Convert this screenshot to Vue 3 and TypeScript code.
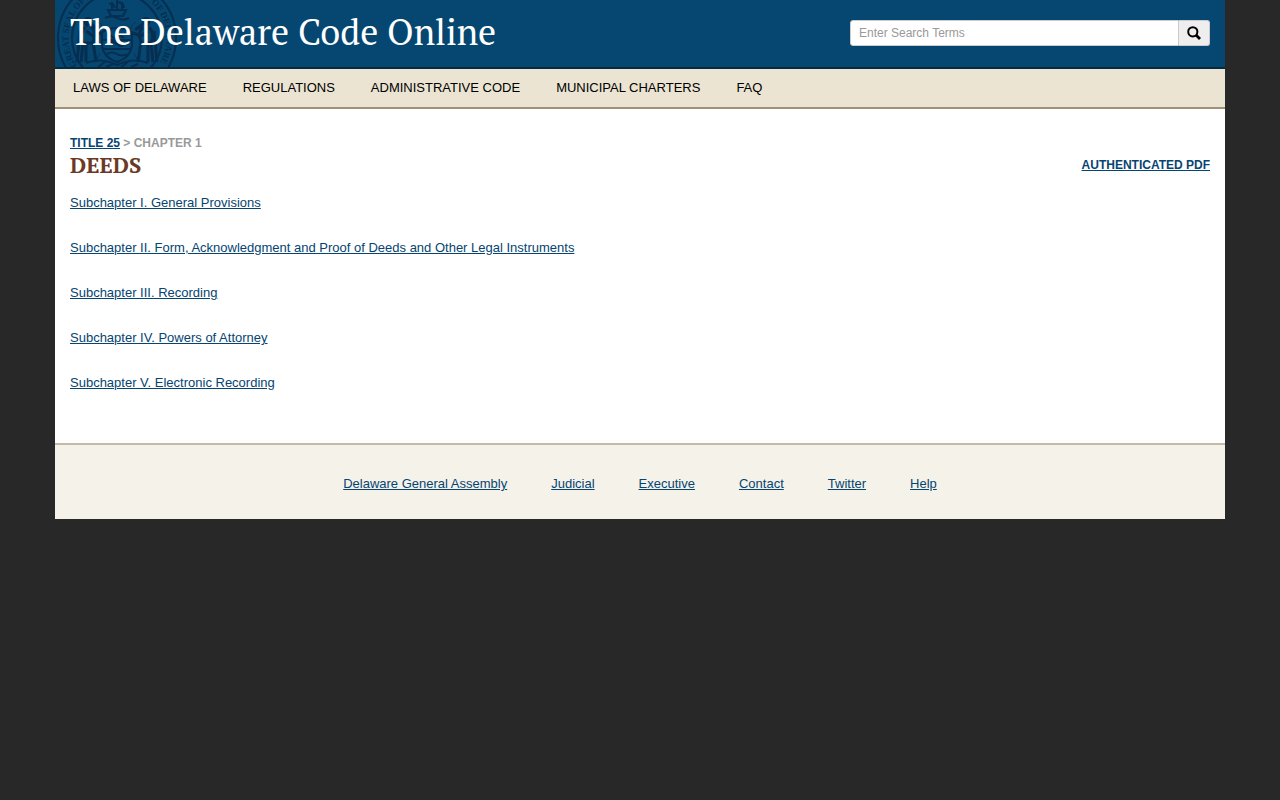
<script setup lang="ts">
interface PageLink {
  label: string
  href: string
}

const navLinks: PageLink[] = [
  { label: 'Laws of Delaware', href: '#laws' },
  { label: 'Regulations', href: '#regulations' },
  { label: 'Administrative Code', href: '#administrative' },
  { label: 'Municipal Charters', href: '#charters' },
  { label: 'FAQ', href: '#faq' },
]

const subchapters: PageLink[] = [
  { label: 'Subchapter I. General Provisions', href: '#sc01' },
  { label: 'Subchapter II. Form, Acknowledgment and Proof of Deeds and Other Legal Instruments', href: '#sc02' },
  { label: 'Subchapter III. Recording', href: '#sc03' },
  { label: 'Subchapter IV. Powers of Attorney', href: '#sc04' },
  { label: 'Subchapter V. Electronic Recording', href: '#sc05' },
]

const footerLinks: PageLink[] = [
  { label: 'Delaware General Assembly', href: '#assembly' },
  { label: 'Judicial', href: '#judicial' },
  { label: 'Executive', href: '#executive' },
  { label: 'Contact', href: '#contact' },
  { label: 'Twitter', href: '#twitter' },
  { label: 'Help', href: '#help' },
]
</script>

<template>
  <div class="container">
    <header class="banner">
      <svg class="seal" viewBox="0 0 124 67" aria-hidden="true">
        <defs>
          <path id="seal-text" d="M62 87 A49 49 0 1 1 63 87" />
        </defs>
        <g fill="none" stroke="#052e50">
          <circle cx="62" cy="38" r="59" stroke-width="2" />
          <circle cx="62" cy="38" r="45" stroke-width="2" />
          <path d="M53 10h18l-3 6H56zM62 0v10M57 2v7M67 2v7M54 4q4-2 6 4M63 2q6 1 6 6M50 18q6-3 12 0t12 0" stroke-width="2" />
          <path d="M47 32q15-8 30 0v14q-2 12-15 16-13-4-15-16zM47 40h30M47 49h30" stroke-width="2" />
          <path d="M53 44q5-4 9 0t9 0M52 54q5-3 10 0t10 0M55 35l4 3 5-3 5 3" stroke-width="2" />
          <path d="M33 18q-5 5 0 8M30 27q-6 7-2 16l-2 19M36 27q6 5 2 15l3 20M31 31l7 5 8-3M27 43h12M31 45v17M25 31l-3 31M36 24l8 6" stroke-width="3" />
          <path d="M91 18q5 5 0 8M94 27q6 7 2 16l2 19M88 27q-6 5-2 15l-3 20M93 31l-7 5-8-3M97 43H85M93 45v17M99 31l3 31M88 24l-8 6" stroke-width="3" />
          <path d="M31 63q15-6 31 2 16-8 31-2M43 67l7-5M51 67l7-3M66 67l7-5M76 67l7-3" stroke-width="2" />
          <path d="M43 22q5 2 5 8M81 22q-5 2-5 8M45 53l-4 8M79 53l4 8" opacity=".7" />
        </g>
        <g fill="#052e50">
          <circle cx="33" cy="21" r="4" />
          <circle cx="91" cy="21" r="4" />
          <text class="seal-letters">
            <textPath href="#seal-text" startOffset="47">GREAT SEAL OF</textPath>
          </text>
          <text class="seal-letters">
            <textPath href="#seal-text" startOffset="190">OF DELAWARE</textPath>
          </text>
        </g>
      </svg>
      <h1 class="site-title">The Delaware Code Online</h1>
      <form class="search" role="search" @submit.prevent>
        <input class="search-input" type="text" placeholder="Enter Search Terms" aria-label="Enter Search Terms" />
        <button class="search-button" type="submit" aria-label="Search">
          <svg width="14" height="14" viewBox="0 0 14 14" fill="none" stroke="#000" aria-hidden="true">
            <circle cx="5.8" cy="5.8" r="4.6" stroke-width="2" />
            <path d="M9 9l4 4" stroke-width="2.8" />
          </svg>
        </button>
      </form>
    </header>

    <nav class="main-nav" aria-label="Main">
      <a v-for="link in navLinks" :key="link.href" :href="link.href">{{ link.label }}</a>
    </nav>

    <main class="content">
      <p class="breadcrumb"><a href="#title25">Title 25</a> &gt; Chapter 1</p>
      <div class="heading-row">
        <h2 class="chapter-title">Deeds</h2>
        <a class="pdf-link" href="#pdf">Authenticated PDF</a>
      </div>
      <ul class="subchapters">
        <li v-for="item in subchapters" :key="item.href">
          <a :href="item.href">{{ item.label }}</a>
        </li>
      </ul>
    </main>

    <footer class="footer">
      <a v-for="link in footerLinks" :key="link.href" :href="link.href">{{ link.label }}</a>
    </footer>
  </div>
</template>

<style>
body {
  background: #282828;
}
</style>

<style scoped>
.container {
  max-width: 1170px;
  margin: 0 auto;
  background: #fff;
  font-family: "Liberation Sans", Arial, sans-serif;
  font-size: 13px;
  line-height: 20px;
}

a {
  color: #064471;
}

.banner {
  position: relative;
  display: flex;
  justify-content: space-between;
  gap: 24px;
  padding: 0 15px;
  height: 67px;
  overflow: hidden;
  background: #064771;
  border-bottom: 2px solid #052b43;
}

.seal {
  position: absolute;
  left: 0;
  top: 0;
  width: 124px;
  height: 67px;
}

.seal-letters {
  font: bold 9px "Liberation Serif", serif;
}

.site-title {
  position: relative;
  margin: 8px 0 0;
  color: #fff;
  font: 400 36px/48px "PT Serif", "Liberation Serif", serif;
}

.search {
  display: flex;
  flex: 0 1 360px;
  height: 26px;
  margin-top: 20px;
}

.search-input {
  flex: 1;
  min-width: 0;
  box-sizing: border-box;
  padding: 0 8px;
  border: 1px solid #ccc;
  border-radius: 3px 0 0 3px;
  background: #fff;
  font: 12px "Liberation Sans", Arial, sans-serif;
}

.search-input::placeholder {
  color: #999;
}

.search-button {
  display: flex;
  align-items: center;
  justify-content: center;
  width: 31px;
  padding: 0;
  border: 1px solid #ccc;
  border-left: 0;
  border-radius: 0 3px 3px 0;
  background: #eee;
}

.main-nav {
  display: flex;
  flex-wrap: wrap;
  gap: 0 36px;
  padding: 9px 18px;
  background: #ebe4d2;
  border-bottom: 2px solid #a18f7b;
}

.main-nav a {
  color: #000;
  font-size: 13px;
  text-decoration: none;
  text-transform: uppercase;
}

.content {
  padding: 24px 15px 50px;
}

.breadcrumb {
  margin: 0;
  color: #999;
  font-size: 12px;
  font-weight: 700;
  text-transform: uppercase;
}

.heading-row {
  display: flex;
  align-items: center;
  justify-content: space-between;
  height: 24px;
}

.chapter-title {
  margin: 0;
  color: #6b3a26;
  font: 700 22px/24px "PT Serif", "Liberation Serif", serif;
  text-transform: uppercase;
}

.pdf-link {
  font-size: 12px;
  font-weight: 700;
  text-transform: uppercase;
}

.subchapters {
  display: flex;
  flex-direction: column;
  gap: 25px;
  margin: 16px 0 0;
  padding: 0;
  list-style: none;
}

.footer {
  display: flex;
  flex-wrap: wrap;
  justify-content: center;
  gap: 8px 44px;
  padding: 29px 15px 25px;
  background: #f5f2e9;
  border-top: 2px solid #c7b9a8;
}
</style>
